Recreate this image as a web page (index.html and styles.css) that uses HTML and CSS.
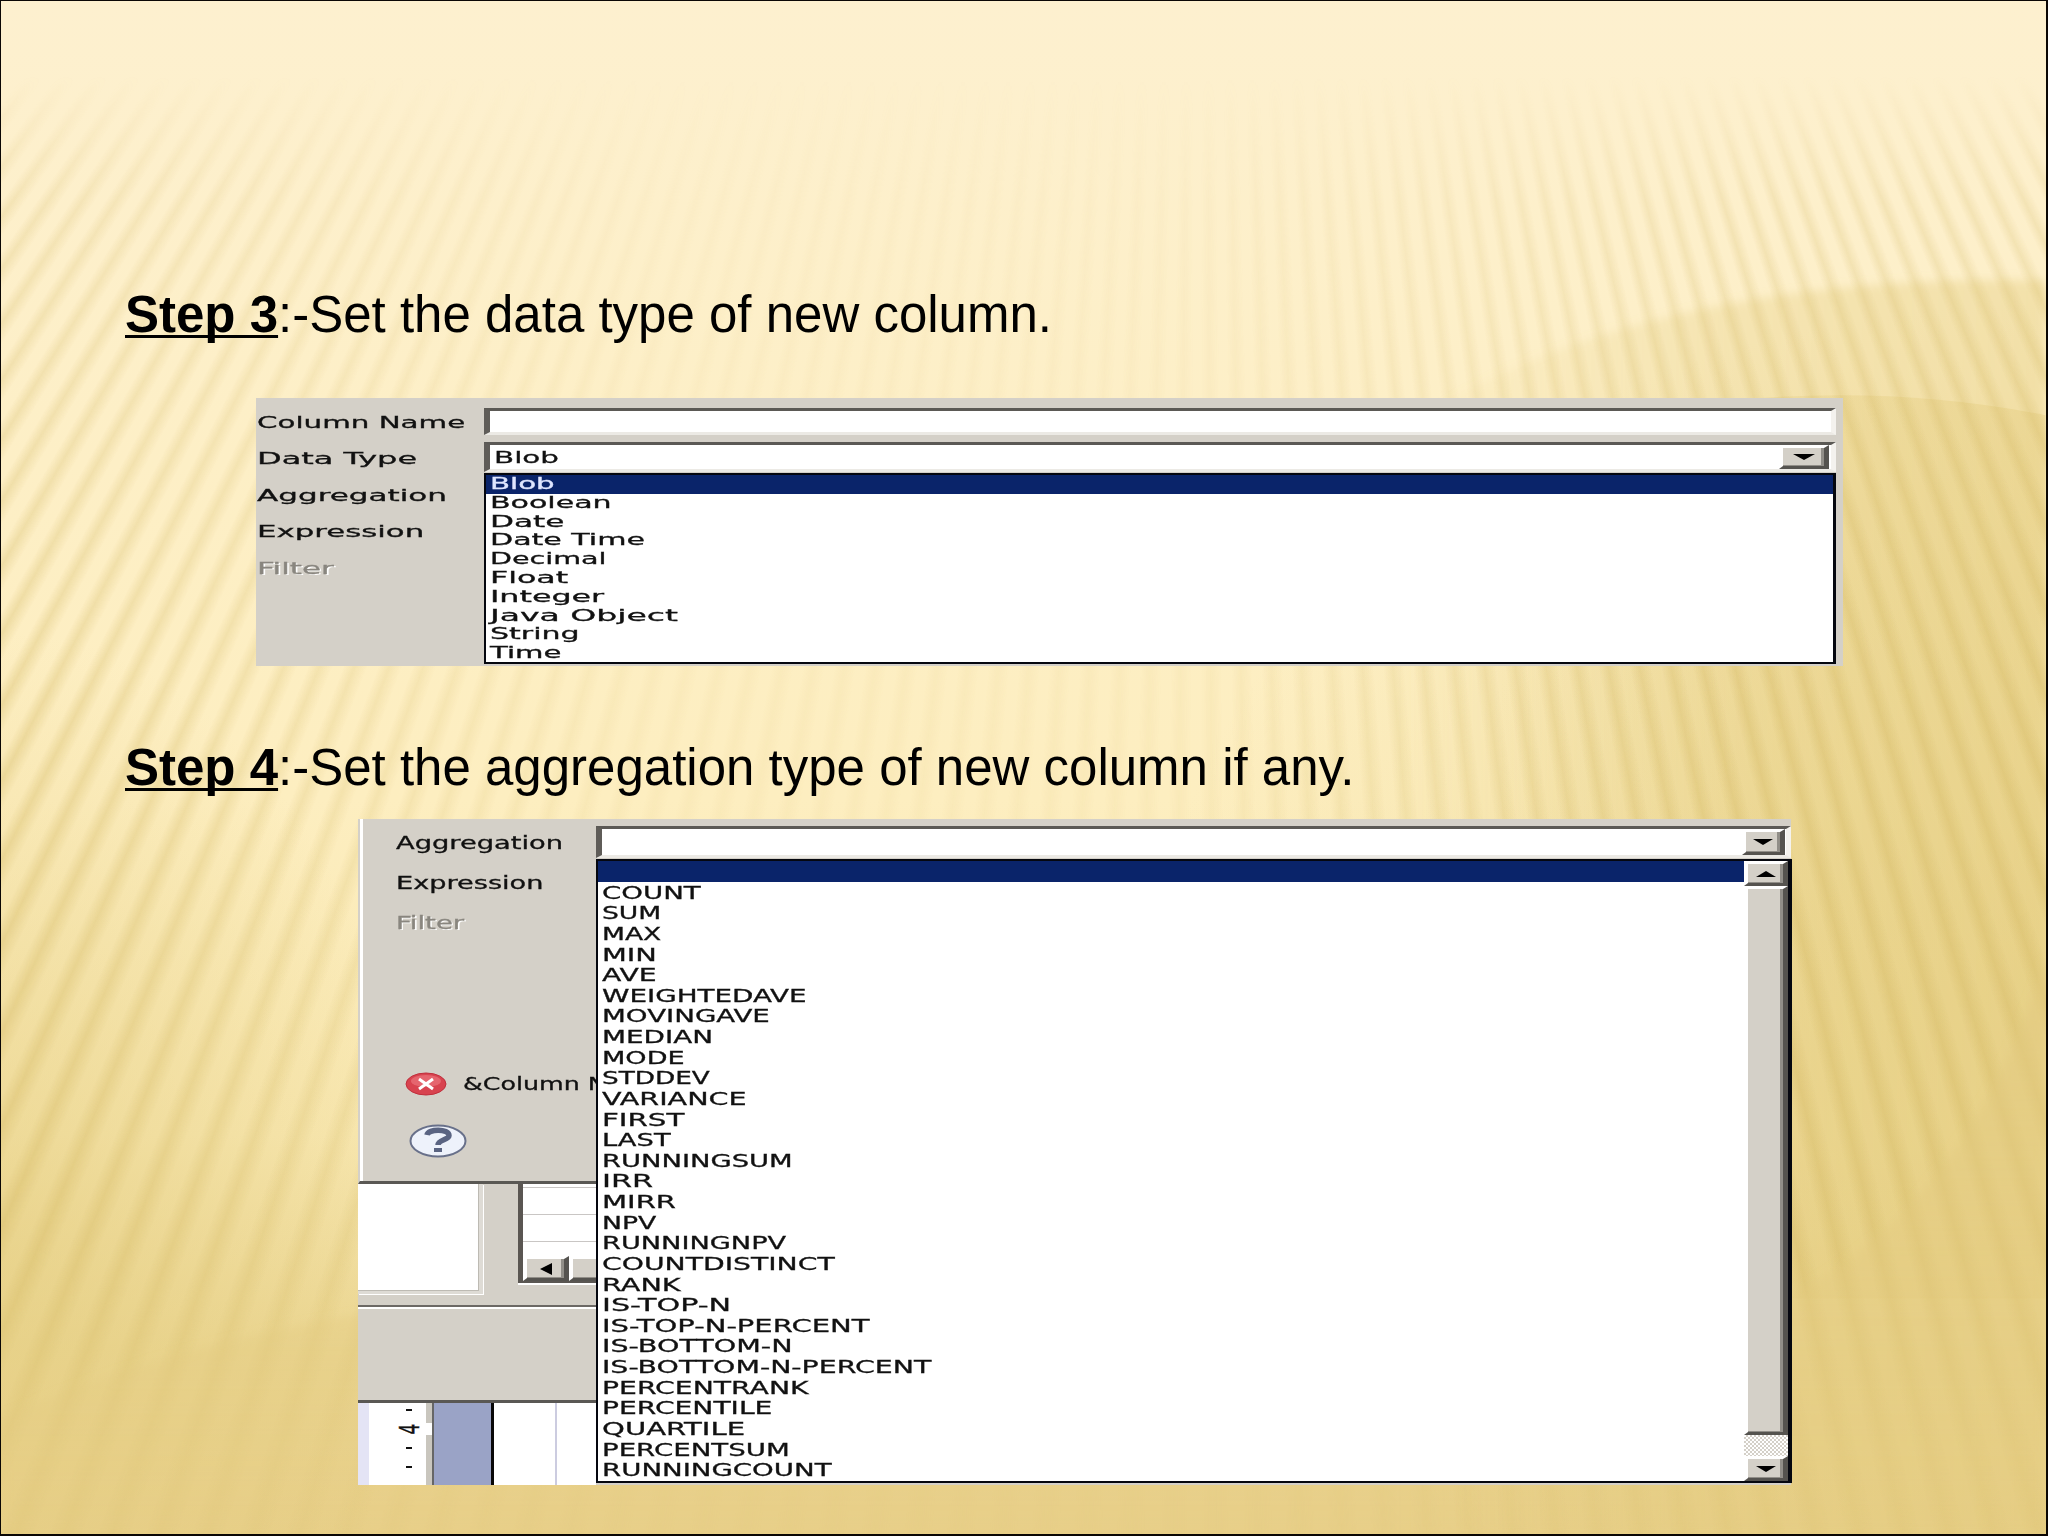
FILE: index.html
```html
<!DOCTYPE html>
<html lang="en">
<head>
<meta charset="utf-8">
<title>New column steps</title>
<link rel="stylesheet" href="styles.css">
</head>
<body>
<main class="slide">
  <div class="backdrop">
    <div class="shade"></div>
    <svg class="waves" viewBox="0 0 2048 1536">
      <defs>
        <linearGradient id="w1" x1="0" x2="1" y1="0" y2="0"><stop offset="0" stop-color="#e3cb7c" stop-opacity="0"/><stop offset=".5" stop-color="#e3cb7c" stop-opacity=".3"/><stop offset="1" stop-color="#e3cb7c" stop-opacity=".4"/></linearGradient>
        <linearGradient id="w2" x1="0" x2="0" y1="0" y2="1"><stop offset="0" stop-color="#e3ca80" stop-opacity=".65"/><stop offset="1" stop-color="#e3ca80" stop-opacity=".2"/></linearGradient>
        <filter id="soft"><feGaussianBlur stdDeviation="5"/></filter>
      </defs>
      <path d="M1400 430Q1640 272 2048 280V1536H1400Z" fill="url(#w1)" filter="url(#soft)"/>
      <path d="M1500 440Q1800 365 2048 415V1300H1500Z" fill="url(#w1)"/>
    </svg>
    <div class="rays"></div>
    <svg class="waves" viewBox="0 0 2048 1536">
      <path d="M0 1420Q200 1330 480 1300L1700 1330Q1950 1270 2048 960V1536H0Z" fill="url(#w2)" filter="url(#soft)"/>
    </svg>
  </div>

  <h1 class="step"><b>Step 3</b>:-Set the data type of new column.</h1>

  <section class="panel type-panel">
    <div class="labels">
      <span data-w="208">Column Name</span><span data-w="161">Data Type</span><span data-w="190">Aggregation</span><span data-w="168">Expression</span><span class="off" data-w="77">Filter</span>
    </div>
    <div class="fields">
      <div class="field name-field"></div>
      <div class="field type-field"><span data-w="64">Blob</span><i class="btn"><svg viewBox="0 0 22 6"><path d="M0 0H22L11 6Z"/></svg></i></div>
      <ul class="list">
        <li class="sel"><span data-w="64">Blob</span></li>
        <li><span data-w="122">Boolean</span></li>
        <li><span data-w="74">Date</span></li>
        <li><span data-w="154">Date Time</span></li>
        <li><span data-w="116">Decimal</span></li>
        <li><span data-w="79">Float</span></li>
        <li><span data-w="115">Integer</span></li>
        <li><span data-w="188">Java Object</span></li>
        <li><span data-w="90">String</span></li>
        <li><span data-w="71">Time</span></li>
      </ul>
    </div>
  </section>

  <h1 class="step second"><b>Step 4</b>:-Set the aggregation type of new column if any.</h1>

  <section class="panel agg-panel">
    <div class="side">
      <div class="dialog">
        <div class="labels">
          <span data-w="167">Aggregation</span><span data-w="147">Expression</span><span class="off" data-w="68">Filter</span>
        </div>
        <div class="error">
          <svg width="42" height="24" viewBox="0 0 42 24"><ellipse cx="21" cy="12" rx="20" ry="11" fill="#d8434f" stroke="#c02e3c"/><ellipse cx="21" cy="9" rx="15" ry="6" fill="#ee7d84" opacity=".6"/><path d="M14 7L28 17M28 7L14 17" stroke="#fff" stroke-width="3"/></svg>
          <span data-w="143">&amp;Column N</span>
        </div>
        <div class="help">
          <svg width="58" height="34" viewBox="0 0 58 34"><ellipse cx="29" cy="17" rx="27.500" ry="15.500" fill="#eef2fb" stroke="#68708a" stroke-width="2"/><path d="M18 11C19 4.500 40 4.500 40 11.500C40 16 29 15.500 29 21" fill="none" stroke="#5a6482" stroke-width="5.500"/><path d="M25 24h8v4h-8z" fill="#5a6482"/></svg>
        </div>
      </div>
      <div class="workspace">
        <div class="pane"></div>
        <div class="table">
          <div class="grid-lines"></div>
          <div class="hscroll"><i class="btn"><svg viewBox="0 0 12 12"><path d="M0 6L12 0V12Z"/></svg></i><i class="btn thumb"></i></div>
        </div>
      </div>
      <div class="footer-bar"></div>
      <div class="ruler">
        <div class="margin"></div>
        <div class="ticks"><i></i><b>4</b><i></i><i></i></div>
        <div class="edge"></div>
        <div class="canvas"></div>
        <div class="page"></div>
      </div>
    </div>
    <div class="fields">
      <div class="field agg-field"><i class="btn"><svg viewBox="0 0 20 6"><path d="M0 0H20L10 6Z"/></svg></i></div>
      <div class="drop">
        <ul class="list">
          <li class="sel"></li>
          <li><span data-w="99">COUNT</span></li>
          <li><span data-w="60">SUM</span></li>
          <li><span data-w="60">MAX</span></li>
          <li><span data-w="55">MIN</span></li>
          <li><span data-w="54">AVE</span></li>
          <li><span data-w="204">WEIGHTEDAVE</span></li>
          <li><span data-w="168">MOVINGAVE</span></li>
          <li><span data-w="111">MEDIAN</span></li>
          <li><span data-w="83">MODE</span></li>
          <li><span data-w="108">STDDEV</span></li>
          <li><span data-w="144">VARIANCE</span></li>
          <li><span data-w="83">FIRST</span></li>
          <li><span data-w="68">LAST</span></li>
          <li><span data-w="190">RUNNINGSUM</span></li>
          <li><span data-w="51">IRR</span></li>
          <li><span data-w="74">MIRR</span></li>
          <li><span data-w="54">NPV</span></li>
          <li><span data-w="184">RUNNINGNPV</span></li>
          <li><span data-w="232">COUNTDISTINCT</span></li>
          <li><span data-w="78">RANK</span></li>
          <li><span data-w="129">IS-TOP-N</span></li>
          <li><span data-w="267">IS-TOP-N-PERCENT</span></li>
          <li><span data-w="190">IS-BOTTOM-N</span></li>
          <li><span data-w="330">IS-BOTTOM-N-PERCENT</span></li>
          <li><span data-w="206">PERCENTRANK</span></li>
          <li><span data-w="171">PERCENTILE</span></li>
          <li><span data-w="143">QUARTILE</span></li>
          <li><span data-w="187">PERCENTSUM</span></li>
          <li><span data-w="230">RUNNINGCOUNT</span></li>
        </ul>
        <div class="vscroll">
          <i class="btn"><svg viewBox="0 0 20 6"><path d="M0 6H20L10 0Z"/></svg></i>
          <i class="btn thumb"></i>
          <i class="track"></i>
          <i class="btn"><svg viewBox="0 0 20 6"><path d="M0 0H20L10 6Z"/></svg></i>
        </div>
      </div>
    </div>
  </section>
</main>
<script src="script.js"></script>
</body>
</html>
```
FILE: styles.css
```css
* { box-sizing: border-box; }
body { margin: 0; }
.slide {
  position: relative;
  width: 2048px;
  height: 1536px;
  overflow: hidden;
  border: 2px solid #0a0604;
  border-width: 1px 2px 2px 1px;
  background: #fdefc6;
  font-family: "DejaVu Sans", Verdana, sans-serif;
  color: #111;
}
.backdrop, .backdrop > * { position: absolute; inset: 0; width: 100%; height: 100%; }
.shade {
  background:
    radial-gradient(ellipse 900px 700px at 2048px 1000px, rgba(228,205,128,.5), rgba(228,205,128,0)),
    radial-gradient(ellipse 420px 620px at 0 1250px, rgba(228,205,128,.6), rgba(228,205,128,0)),
    linear-gradient(#fdf0cf 0, #fdefc6 30%, #fdeec0 52%, #f8e7b0 74%, #ebd692 88%, #e9d08a 100%);
}
.rays {
  background: repeating-conic-gradient(from 120deg at 1200px -1500px, rgba(208,180,92,0) 0deg, rgba(208,180,92,0) .25deg, rgba(208,180,92,.33) .55deg, rgba(208,180,92,0) .8deg);
  -webkit-mask-image: linear-gradient(transparent 75px, rgba(0,0,0,.6) 200px, #000 700px, #000 1250px, rgba(0,0,0,.4) 1450px), linear-gradient(90deg, #000 0, rgba(0,0,0,.2) 32%, rgba(0,0,0,.22) 58%, #000 85%);
  mask-image: linear-gradient(transparent 75px, rgba(0,0,0,.6) 200px, #000 700px, #000 1250px, rgba(0,0,0,.4) 1450px), linear-gradient(90deg, #000 0, rgba(0,0,0,.2) 32%, rgba(0,0,0,.22) 58%, #000 85%);
  -webkit-mask-composite: source-in;
  mask-composite: intersect;
}
.step {
  position: relative;
  margin: 284px 0 0 124px;
  height: 60px;
  font: 400 51px/60px "Liberation Sans", Arial, sans-serif;
  color: #000;
  white-space: nowrap;
}
.step b { text-decoration: underline; text-decoration-thickness: 3px; text-underline-offset: 3px; text-decoration-skip-ink: none; }
.step.second { margin-top: 72px; }

.panel { position: relative; display: flex; background: #d4d0c8; white-space: nowrap; -webkit-text-stroke: .3px currentColor; }
.panel span { display: inline-block; transform-origin: 0 50%; }
.labels { display: flex; flex-direction: column; align-items: flex-start; }
.off { color: #89867f; text-shadow: 1px 1px 0 #fff; }
.fields { display: flex; flex-direction: column; }
.field {
  display: flex;
  justify-content: space-between;
  background: #fff;
  border: solid;
  border-width: 3px 5px 3px 6px;
  border-color: #5b5955 #f4f2ee #eceae5 #5f5c58;
}
.btn {
  display: flex;
  align-items: center;
  justify-content: center;
  background: #d4d0c8;
  border: solid;
  border-width: 3px 5px 3px 4px;
  border-color: #fff #55534f #55534f #fff;
  box-shadow: inset -3px -1px 0 #918e88;
}
.btn svg { width: 20px; height: 6px; }
.list { margin: 0; padding: 0; list-style: none; background: #fff; border: 2px solid #05070f; }
.sel { background: #0a246a; color: #dfe6ff; }

.type-panel { width: 1587px; height: 268px; margin: 53px 0 0 255px; font-size: 16.500px; }
.type-panel .labels { width: 228px; padding: 7px 0 0 1px; line-height: 36.400px; }
.type-panel .fields { width: 1352px; padding-top: 10px; }
.name-field { height: 27px; }
.type-field { height: 30px; margin-top: 7px; line-height: 25px; padding: 0 2px 0 4px; }
.type-field .btn { width: 50px; height: 24px; }
.type-field .btn svg { width: 22px; }
.type-panel .list { height: 191px; margin-top: 1px; border-right-width: 3px; line-height: 18.800px; font-size: 16px; }
.type-panel .list li { height: 18.800px; padding-left: 4px; }

.agg-panel { width: 1433px; height: 666px; margin: 21px 0 0 357px; font-size: 17px; }
.side { width: 238px; display: flex; flex-direction: column; overflow: hidden; }
.dialog { height: 366px; border-left: 2px solid #d4d0c8; border-bottom: 3px solid #5a5854; box-shadow: inset 3px 0 0 #fff; overflow: hidden; }
.dialog .labels { padding: 4px 0 0 36px; line-height: 40px; }
.error { display: flex; align-items: center; gap: 16px; height: 28px; padding-left: 45px; margin-top: 127px; }
.error svg { flex: none; }
.help { padding: 26px 0 0 49px; }
.workspace { display: flex; height: 123px; border-bottom: 2px solid #6c6965; box-shadow: 0 2px 0 #fff; }
.pane { flex: none; width: 125px; height: 110px; background: #fff; border: solid; border-width: 0 4px 3px 0; border-color: #dedbd5; box-shadow: inset -1px -1px 0 #bdbab3, 1px 1px 0 #fff; }
.table { flex: 1; min-width: 0; height: 99px; margin-left: 35px; border-left: 5px solid #5a5652; border-bottom: 2px solid #5a5652; box-shadow: 0 2px 0 #fff; display: flex; flex-direction: column; }
.grid-lines { flex: 1; background: repeating-linear-gradient(#fff 0 3px, #c9c6c4 3px 4px, #fff 4px 27px); }
.hscroll { display: flex; height: 25px; overflow: hidden; }
.hscroll .btn { width: 46px; flex: none; }
.hscroll .btn svg { width: 12px; height: 12px; }
.footer-bar { height: 96px; border-bottom: 3px solid #5a5854; }
.ruler { display: flex; flex: 1; background: #fff; }
.margin { width: 11px; background: #e4e4f5; }
.ticks { width: 57px; display: flex; flex-direction: column; align-items: center; padding: 6px 0 0 23px; }
.ticks i { width: 6px; height: 2px; margin-bottom: 17px; background: #111; }
.ticks i:first-child { margin-bottom: 0; }
.ticks b { height: 36px; width: 20px; line-height: 32px; font-size: 17px; font-weight: 400; text-align: center; transform: translateX(4px) rotate(-90deg) scaleY(1.600); }
.edge { width: 8px; background: linear-gradient(#c9c6be 20px, #fff 20px 32px, #c9c6be 32px); border-right: 2px solid #666; }
.canvas { width: 60px; background: #9aa3c6; border-right: 3px solid #080808; }
.page { flex: 1; background: linear-gradient(90deg, #fff 61px, #cccce0 61px 63px, #fff 63px); }

.agg-panel .fields { width: 1195px; padding-top: 7px; }
.agg-field { width: 1195px; height: 32px; justify-content: flex-end; padding-right: 1px; }
.agg-field .btn { width: 43px; }
.drop { display: flex; width: 1196px; height: 624px; margin-top: 1px; background: #fff; border: 2px solid #05070f; border-right-width: 4px; }
.drop .list { flex: 1; border: 0; line-height: 20.630px; font-size: 17.300px; }
.drop li { height: 20.630px; padding: 1px 0 0 4px; }
.vscroll { width: 44px; display: flex; flex-direction: column; }
.vscroll .btn { height: 25px; }
.vscroll .thumb { height: 549px; }
.track { height: 21px; background: repeating-conic-gradient(#d4d0c8 0 25%, #fff 0 50%) 0 0 / 4px 4px; }
```
FILE: script.js
```js
// Stretch each label horizontally to its set width.
document.querySelectorAll('[data-w]').forEach(function (el) {
  el.style.transform = 'scaleX(' + (el.dataset.w / el.offsetWidth).toFixed(3) + ')';
});
```
